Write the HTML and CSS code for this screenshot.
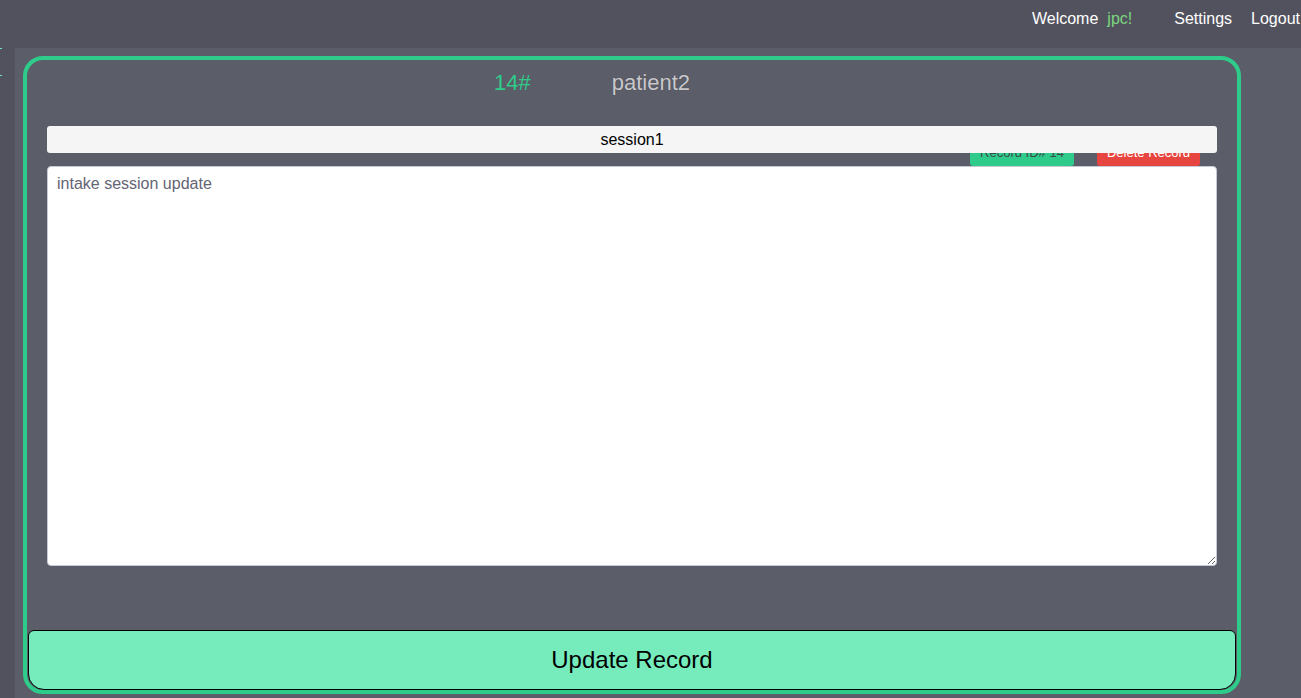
FILE: index.html
```html
<!DOCTYPE html>
<html>
<head>
<meta charset="utf-8">
<link rel="stylesheet" href="styles.css">
</head>
<body>
<header class="topbar">
  <span class="welcome">Welcome</span>
  <span class="user">jpc!</span>
  <a class="nav-link settings">Settings</a>
  <a class="nav-link logout">Logout</a>
</header>
<div class="layout">
  <aside class="sidebar">
    <span class="tick tick-a"></span>
    <span class="tick tick-b"></span>
  </aside>
  <main class="main">
    <section class="card">
      <div class="title-row">
        <span class="record-no">14#</span>
        <span class="patient">patient2</span>
      </div>
      <input class="session-input" type="text" value="session1">
      <div class="action-row">
        <button class="btn btn-id">Record ID# 14</button>
        <button class="btn btn-delete">Delete Record</button>
      </div>
      <textarea class="notes">intake session update</textarea>
      <button class="update-btn">Update Record</button>
    </section>
  </main>
</div>
</body>
</html>
```

FILE: styles.css
```css
* { box-sizing: border-box; }
html, body { margin: 0; padding: 0; }
body {
  background: #5b5d69;
  font-family: "Liberation Sans", Arial, sans-serif;
  overflow: hidden;
  height: 698px;
}
.topbar {
  height: 48px;
  background: #52525e;
  display: flex;
  align-items: flex-start;
  justify-content: flex-end;
  padding-top: 10px;
  font-size: 16px;
  line-height: 18px;
  color: #ffffff;
  white-space: nowrap;
}
.welcome { margin-right: 9px; }
.user { color: #7bd67f; margin-right: 42px; }
.nav-link { color: #ffffff; }
.settings { margin-right: 19px; }
.logout { margin-right: 1px; }
.layout {
  display: flex;
  height: 650px;
}
.sidebar {
  width: 15px;
  background: #52525e;
  position: relative;
}
.tick {
  position: absolute;
  left: 0;
  width: 2px;
  height: 1px;
  background: #6fe3d0;
}
.tick-a { top: 0; }
.tick-b { top: 27px; }
.main {
  flex: 1;
  background: #5b5d69;
  padding: 8px 0 0 8px;
}
.card {
  width: 1218px;
  height: 638px;
  border: 4px solid #2ecb8a;
  border-radius: 20px;
  padding: 10px 0 0 0;
  display: flex;
  flex-direction: column;
}
.title-row {
  display: flex;
  gap: 81px;
  padding-left: 467px;
  font-size: 22px;
  line-height: 26px;
  height: 26px;
}
.record-no { color: #2ecb8a; }
.patient { color: #c9c9cc; text-shadow: 0 0 1px rgba(0,0,0,0.35); }
.session-input {
  position: relative;
  z-index: 1;
  margin: 30px 20px 0 20px;
  height: 27px;
  border: none;
  border-radius: 3px;
  background: #f5f5f5;
  text-align: center;
  font-family: "Liberation Sans", Arial, sans-serif;
  font-size: 16px;
  color: #000;
  padding: 0;
}
.action-row {
  display: flex;
  justify-content: flex-end;
  gap: 23px;
  padding-right: 37px;
  margin-top: -13px;
  height: 26px;
}
.btn {
  height: 26px;
  border: none;
  border-radius: 3px;
  font-family: "Liberation Sans", Arial, sans-serif;
  font-size: 13px;
  padding: 0;
  line-height: 26px;
  white-space: nowrap;
  text-align: center;
}
.btn-id { background: #2ecb8a; color: #3d4a4a; width: 104px; }
.btn-delete { background: #e74540; color: #ffffff; width: 103px; }
.notes {
  margin: 0 20px;
  height: 400px;
  border: 1px solid #c5c8d6;
  border-radius: 4px;
  background: #ffffff;
  padding: 8px 9px;
  font-family: "Liberation Sans", Arial, sans-serif;
  font-size: 16px;
  line-height: 18px;
  color: #646473;
  resize: vertical;
}
.update-btn {
  margin: 64px 0 0 1px;
  width: 1208px;
  height: 60px;
  background: #76ecbd;
  border: 1px solid #000;
  border-radius: 6px 6px 16px 16px;
  font-family: "Liberation Sans", Arial, sans-serif;
  font-size: 24px;
  color: #000;
}
```
